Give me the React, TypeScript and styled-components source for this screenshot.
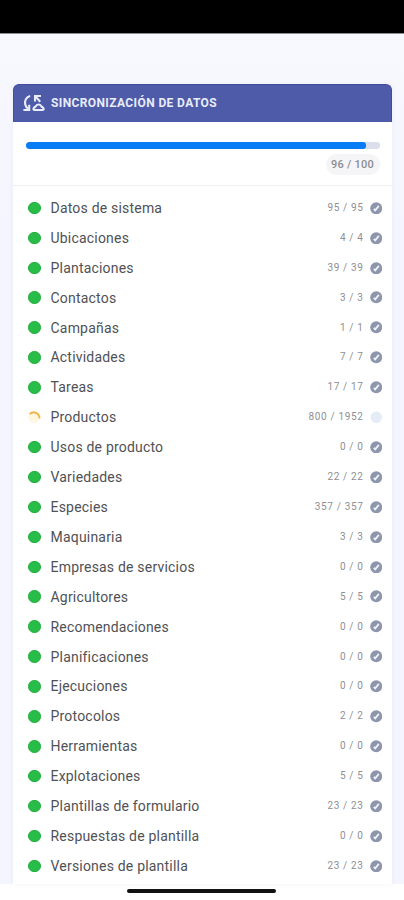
import React from 'react';
import styled, { createGlobalStyle } from 'styled-components';

const GlobalStyle = createGlobalStyle`
  * { box-sizing: border-box; }
  body { margin: 0; background: #fff; font-family: Roboto, "Liberation Sans", sans-serif; }
`;

const Screen = styled.div`
  height: 900px;
  overflow: hidden;
  display: flex;
  flex-direction: column;
  background: #fff;
`;

const StatusBar = styled.div`
  flex: none;
  height: 34px;
  background: #000;
  border-bottom: 1px solid #8c8d90;
`;

const Content = styled.main`
  flex: none;
  height: 850px;
  padding: 50px 12px 0 13px;
  background: linear-gradient(#f8f9fe, #f4f5fe 22%);
`;

const Card = styled.section`
  height: 800px;
  background: #fff;
  border-radius: 6px 6px 0 0;
  box-shadow: 0 0 5px rgba(70, 80, 160, 0.07);
`;

const CardHeader = styled.header`
  height: 37.5px;
  display: flex;
  align-items: center;
  gap: 6px;
  padding-left: 9px;
  color: #e9ecfb;
  background: #4d5ba8;
  border-top: 1px solid #444b9c;
  border-left: 1px solid #444b9c;
  border-right: 1px solid #444b9c;
  border-radius: 6px 6px 0 0;
`;

const Title = styled.h1`
  margin: 0;
  font-size: 12px;
  line-height: 16px;
  font-weight: 700;
  letter-spacing: 0.39px;
  white-space: nowrap;
`;

const Summary = styled.div`
  height: 64.5px;
  padding: 20.5px 12px 0 13px;
  display: flex;
  flex-direction: column;
  align-items: flex-end;
  gap: 5px;
  border-bottom: 1px solid #eeeff2;
`;

const Track = styled.div`
  width: 100%;
  height: 7px;
  border-radius: 3px;
  background: #dadfeb;
  overflow: hidden;
`;

const Fill = styled.div<{ $percent: number }>`
  width: ${({ $percent }) => $percent}%;
  height: 100%;
  border-radius: 3px;
  background: #087cf5;
`;

const Pill = styled.span`
  width: 54px;
  height: 21px;
  margin-right: 0.5px;
  border-radius: 11px;
  background: #f5f5f7;
  color: #8b8c91;
  font-size: 11px;
  line-height: 22px;
  font-weight: 500;
  letter-spacing: 0.25px;
  text-align: center;
  white-space: nowrap;
`;

const List = styled.ul`
  margin: 0;
  padding: 7px 10px 0 15px;
  list-style: none;
`;

const Row = styled.li`
  height: 29.92px;
  display: flex;
  align-items: center;
`;

const Dot = styled.span`
  width: 12.5px;
  height: 12.5px;
  border-radius: 50%;
  background: #28bd48;
  border: 1px solid #20ad3b;
`;

const Label = styled.span`
  margin-left: 10px;
  flex: 1;
  color: #505155;
  font-size: 14px;
  line-height: 20px;
  letter-spacing: 0.2px;
  white-space: nowrap;
`;

const Count = styled.span`
  margin-right: 6px;
  color: #8e8f93;
  font-size: 10px;
  line-height: 16px;
  letter-spacing: 0.65px;
  white-space: nowrap;
`;

const Icon = styled.svg`
  display: block;
  flex: none;
`;

const HomeArea = styled.footer`
  height: 16px;
  display: flex;
  justify-content: center;
  padding: 5px 2px 0 0;
`;

const HomeIndicator = styled.div`
  width: 149px;
  height: 4px;
  border-radius: 2px;
  background: #111;
`;

type Item = [label: string, count: string, loading?: boolean];

const items: Item[] = [
  ['Datos de sistema', '95 / 95'],
  ['Ubicaciones', '4 / 4'],
  ['Plantaciones', '39 / 39'],
  ['Contactos', '3 / 3'],
  ['Campañas', '1 / 1'],
  ['Actividades', '7 / 7'],
  ['Tareas', '17 / 17'],
  ['Productos', '800 / 1952', true],
  ['Usos de producto', '0 / 0'],
  ['Variedades', '22 / 22'],
  ['Especies', '357 / 357'],
  ['Maquinaria', '3 / 3'],
  ['Empresas de servicios', '0 / 0'],
  ['Agricultores', '5 / 5'],
  ['Recomendaciones', '0 / 0'],
  ['Planificaciones', '0 / 0'],
  ['Ejecuciones', '0 / 0'],
  ['Protocolos', '2 / 2'],
  ['Herramientas', '0 / 0'],
  ['Explotaciones', '5 / 5'],
  ['Plantillas de formulario', '23 / 23'],
  ['Respuestas de plantilla', '0 / 0'],
  ['Versiones de plantilla', '23 / 23'],
];

const SyncIcon = () => (
  <Icon width="22" height="18" viewBox="0 0 22 18" fill="none" stroke="currentColor" strokeWidth="2.1">
    <path d="M7.2 2C3.2 2.8 1.2 6.8 2.3 10.6c.5 1.7 1.4 3 2.7 4.1" />
    <path d="M0.4 16h5.8v-5.2" />
    <path d="M12 7.6V2h6M12.4 2.4l4.8 5.4" />
    <path d="M11.7 16c-2.1 0-1.6-2.2 1-3.5 .9-2.6 4.8-2.6 5.7 0 2.6 1.3 3.1 3.5 1 3.5z" />
  </Icon>
);

const CheckIcon = () => (
  <Icon width="12.5" height="12.5" viewBox="0 0 13 13">
    <circle cx="6.5" cy="6.5" r="6.25" fill="#8d96ad" />
    <path d="M4 7.2l1.4 1.5L9.2 4" fill="none" stroke="#f1f3fa" strokeWidth="1.8" />
  </Icon>
);

const PendingIcon = () => (
  <Icon width="12.5" height="12.5" viewBox="0 0 13 13">
    <circle cx="6.5" cy="6.5" r="6" fill="#e4edf5" />
  </Icon>
);

const Spinner = () => (
  <Icon width="12.5" height="12.5" viewBox="0 0 13 13" fill="none">
    <circle cx="6.5" cy="6.5" r="5.8" fill="#fff6e0" />
    <path d="M1.8 3.2C5.5-.6 12 2 12 7.8" stroke="#f2b344" strokeWidth="1.9" />
  </Icon>
);

const App = () => (
  <>
    <GlobalStyle />
    <Screen>
      <StatusBar />
      <Content>
        <Card>
          <CardHeader>
            <SyncIcon />
            <Title>SINCRONIZACIÓN DE DATOS</Title>
          </CardHeader>
          <Summary>
            <Track><Fill $percent={96} /></Track>
            <Pill>96 / 100</Pill>
          </Summary>
          <List>
            {items.map(([label, count, loading]) => (
              <Row key={label}>
                {loading ? <Spinner /> : <Dot />}
                <Label>{label}</Label>
                <Count>{count}</Count>
                {loading ? <PendingIcon /> : <CheckIcon />}
              </Row>
            ))}
          </List>
        </Card>
      </Content>
      <HomeArea><HomeIndicator /></HomeArea>
    </Screen>
  </>
);

export default App;
